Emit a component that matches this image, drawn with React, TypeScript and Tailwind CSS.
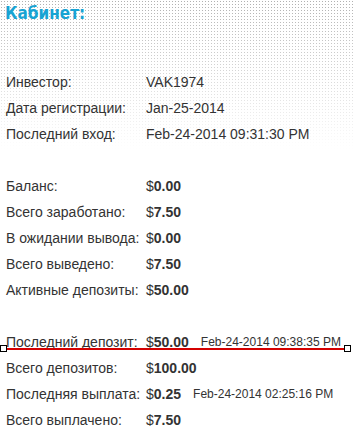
import React from 'react';

type Row = { label: string; value?: string; date?: string; plain?: boolean; mark?: boolean } | null;

const rows: Row[] = [
  { label: 'Инвестор:', value: 'VAK1974', plain: true },
  { label: 'Дата регистрации:', value: 'Jan-25-2014', plain: true },
  { label: 'Последний вход:', value: 'Feb-24-2014 09:31:30 PM', plain: true },
  null,
  { label: 'Баланс:', value: '0.00' },
  { label: 'Всего заработано:', value: '7.50' },
  { label: 'В ожидании вывода:', value: '0.00' },
  { label: 'Всего выведено:', value: '7.50' },
  { label: 'Активные депозиты:', value: '50.00' },
  null,
  { label: 'Последний депозит:', value: '50.00', date: 'Feb-24-2014 09:38:35 PM', mark: true },
  { label: 'Всего депозитов:', value: '100.00' },
  { label: 'Последняя выплата:', value: '0.25', date: 'Feb-24-2014 02:25:16 PM' },
  { label: 'Всего выплачено:', value: '7.50' },
];

export default function App() {
  return (
    <div className="relative w-[354px] h-[435px] overflow-hidden bg-white bg-[linear-gradient(to_bottom,rgba(255,255,255,0)_0px,#fff_150px),radial-gradient(circle,#b0b0b0_0.6px,transparent_0.7px)] bg-[length:100%_100%,3px_3px] font-['Liberation_Sans',Arial,sans-serif] text-[14px] text-[#333]">
      {/* Title */}
      <h1 className="pl-[5px] pt-[3px] leading-[20px] font-['DejaVu_Sans_Condensed','DejaVu_Sans',Verdana,sans-serif] text-[17px] font-bold text-[#18a3d3]">
        Кабинет:
      </h1>

      {/* Account rows */}
      <div className="mt-[46px] pl-[6px]">
        {rows.map((r, i) =>
          r === null ? (
            <div key={i} className="h-[26px]" />
          ) : (
            <div key={i} className="relative flex h-[26px] items-center">
              <span className="w-[140px] shrink-0">{r.label}</span>
              {r.plain ? (
                <span>{r.value}</span>
              ) : (
                <span>
                  $<b className="font-bold">{r.value}</b>
                </span>
              )}
              {r.date && <span className="ml-[12px] text-[12px]">{r.date}</span>}
              {r.mark && (
                <div className="absolute left-[-6px] top-[16px] w-[354px] h-[7px]">
                  <div className="absolute left-[6px] right-[9px] top-[3px] h-[2px] bg-[#d40000]" />
                  <div className="absolute left-0 top-0 w-[7px] h-[7px] border-[1.5px] border-black bg-white" />
                  <div className="absolute left-[344px] top-0 w-[7px] h-[7px] border-[1.5px] border-black bg-white" />
                </div>
              )}
            </div>
          )
        )}
      </div>
    </div>
  );
}
